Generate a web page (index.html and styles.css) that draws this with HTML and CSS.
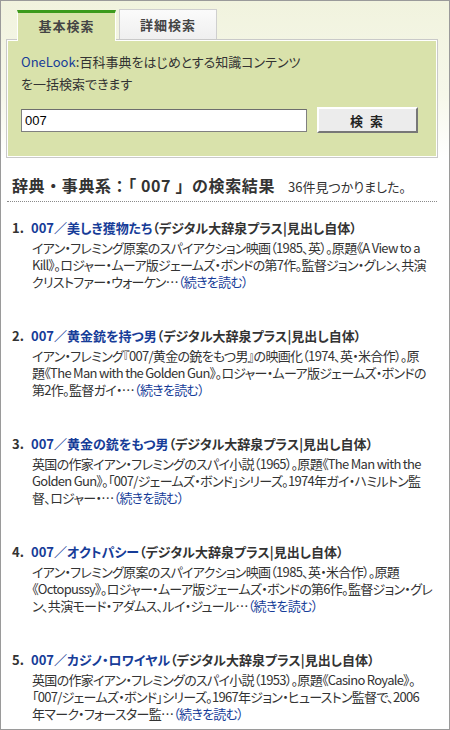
FILE: index.html
```html
<!DOCTYPE html>
<html lang="ja">
<head>
    <meta charset="UTF-8">
    <meta name="viewport" content="width=device-width, initial-scale=1.0">
    <title>辞典・事典系の検索結果</title>
    <link rel="stylesheet" href="styles.css">
</head>
<body>
    <div class="page">
        <div class="search-area">
            <div class="tabs">
                <div class="tab active">基本検索</div>
                <div class="tab">詳細検索</div>
            </div>
            <div class="panel">
                <p class="intro"><a href="#">OneLook</a>:百科事典をはじめとする知識コンテンツ<br>を一括検索できます</p>
                <div class="search-row">
                    <input type="text" class="query" value="007">
                    <button class="search-btn">検 索</button>
                </div>
            </div>
        </div>

        <div class="results">
            <h2 class="result-head">辞典・事典系：「 007 」の検索結果<span class="count">36件見つかりました。</span></h2>
            <ol class="result-list">
                <li>
                    <span class="num">1.</span>
                    <div class="item">
                        <div class="item-title"><a href="#">007／美しき獲物たち</a>（デジタル大辞泉プラス|見出し自体）</div>
                        <p class="desc">イアン・フレミング原案のスパイアクション映画（1985、英）。原題《A View to a<br>Kill》。ロジャー・ムーア版ジェームズ・ボンドの第7作。監督ジョン・グレン、共演<br>クリストファー・ウォーケン…<a href="#">（続きを読む）</a></p>
                    </div>
                </li>
                <li>
                    <span class="num">2.</span>
                    <div class="item">
                        <div class="item-title"><a href="#">007／黄金銃を持つ男</a>（デジタル大辞泉プラス|見出し自体）</div>
                        <p class="desc">イアン・フレミング『007/黄金の銃をもつ男』の映画化（1974、英・米合作）。原<br>題《The Man with the Golden Gun》。ロジャー・ムーア版ジェームズ・ボンドの<br>第2作。監督ガイ・…<a href="#">（続きを読む）</a></p>
                    </div>
                </li>
                <li>
                    <span class="num">3.</span>
                    <div class="item">
                        <div class="item-title"><a href="#">007／黄金の銃をもつ男</a>（デジタル大辞泉プラス|見出し自体）</div>
                        <p class="desc">英国の作家イアン・フレミングのスパイ小説（1965）。原題《The Man with the<br>Golden Gun》。「007/ジェームズ・ボンド」シリーズ。1974年ガイ・ハミルトン監<br>督、ロジャー・…<a href="#">（続きを読む）</a></p>
                    </div>
                </li>
                <li>
                    <span class="num">4.</span>
                    <div class="item">
                        <div class="item-title"><a href="#">007／オクトパシー</a>（デジタル大辞泉プラス|見出し自体）</div>
                        <p class="desc">イアン・フレミング原案のスパイアクション映画（1985、英・米合作）。原題<br>《Octopussy》。ロジャー・ムーア版ジェームズ・ボンドの第6作。監督ジョン・グレ<br>ン、共演モード・アダムス、ルイ・ジュール…<a href="#">（続きを読む）</a></p>
                    </div>
                </li>
                <li>
                    <span class="num">5.</span>
                    <div class="item">
                        <div class="item-title"><a href="#">007／カジノ・ロワイヤル</a>（デジタル大辞泉プラス|見出し自体）</div>
                        <p class="desc">英国の作家イアン・フレミングのスパイ小説（1953）。原題《Casino Royale》。<br>「007/ジェームズ・ボンド」シリーズ。1967年ジョン・ヒューストン監督で、2006<br>年マーク・フォースター監…<a href="#">（続きを読む）</a></p>
                    </div>
                </li>
            </ol>
        </div>
    </div>
</body>
</html>
```

FILE: styles.css
```css
body {
    margin: 0;
    font-family: "Noto Sans CJK JP", "Liberation Sans", sans-serif;
    font-feature-settings: "palt";
    color: #333;
    background-color: #fff;
}
a {
    color: #163c98;
    text-decoration: none;
}
.page {
    width: 450px;
    height: 730px;
    box-sizing: border-box;
    border: 1px solid #9a9a9a;
    overflow: hidden;
}
.search-area {
    padding: 8px 0 0 5px;
    background: linear-gradient(#f1f3de, #f6f7ea 60%, #fff);
}
.tabs {
    display: flex;
    align-items: flex-end;
    gap: 3px;
    margin-left: 11px;
}
.tab {
    width: 98px;
    height: 30px;
    box-sizing: border-box;
    border: 1px solid #cfcfcf;
    border-bottom: none;
    background: linear-gradient(#fbfbfb, #efefef);
    font-size: 13px;
    font-weight: bold;
    color: #444;
    text-align: center;
    line-height: 29px;
    letter-spacing: 1px;
}
.tab.active {
    position: relative;
    z-index: 1;
    width: 99px;
    height: 31px;
    margin-bottom: -2px;
    border-top: 3px solid #3c9a1c;
    border-left-color: #fff;
    border-right-color: #fff;
    background: #d9e2ab;
    line-height: 26px;
}
.panel {
    width: 432px;
    box-sizing: border-box;
    padding: 11px 14px 24px 14px;
    border: 1px solid #c9c9c9;
    box-shadow: inset 0 0 0 1px #fff;
    background-color: #d9e2ab;
}
.intro {
    margin: 0;
    font-size: 13px;
    line-height: 22px;
    color: #333;
}
.search-row {
    display: flex;
    align-items: center;
    gap: 10px;
    margin-top: 12px;
}
.query {
    width: 286px;
    height: 23px;
    box-sizing: border-box;
    margin: 0;
    padding: 1px 3px 0;
    border: 1px solid #808080;
    border-top-color: #6e6e6e;
    background-color: #fff;
    font-family: "Liberation Sans", sans-serif;
    font-size: 13px;
    color: #000;
}
.search-btn {
    width: 101px;
    height: 26px;
    margin: 0;
    border: 2px solid;
    border-color: #fff #777 #777 #fff;
    background-color: #ececec;
    font-family: "Noto Sans CJK JP", sans-serif;
    font-size: 13px;
    font-weight: bold;
    color: #222;
    letter-spacing: 2px;
    cursor: pointer;
}
.results {
    width: 430px;
    margin: 17px 0 0 6px;
}
.result-head {
    margin: 0;
    padding: 0 0 4px 5px;
    border-bottom: 1px dotted #8a8a8a;
    font-size: 16px;
    font-feature-settings: normal;
    line-height: 20px;
    letter-spacing: 0.6px;
    color: #333;
    white-space: nowrap;
}
.count {
    margin-left: 13px;
    font-size: 13px;
    font-weight: normal;
    font-feature-settings: "palt";
    letter-spacing: 0;
}
.result-list {
    list-style-type: none;
    margin: 15px 0 0;
    padding: 0 0 0 5px;
}
.result-list li {
    display: flex;
    margin-bottom: 35px;
}
.num {
    width: 19px;
    flex-shrink: 0;
    font-size: 13px;
    font-weight: bold;
    line-height: 22px;
}
.item-title {
    font-size: 13px;
    font-weight: bold;
    line-height: 22px;
    white-space: nowrap;
}
.desc {
    margin: 0 0 0 1px;
    font-size: 13px;
    line-height: 17px;
    letter-spacing: -0.7px;
    white-space: nowrap;
}
.desc a {
    display: inline-block;
    height: 17px;
    line-height: 17px;
    vertical-align: top;
}
```
